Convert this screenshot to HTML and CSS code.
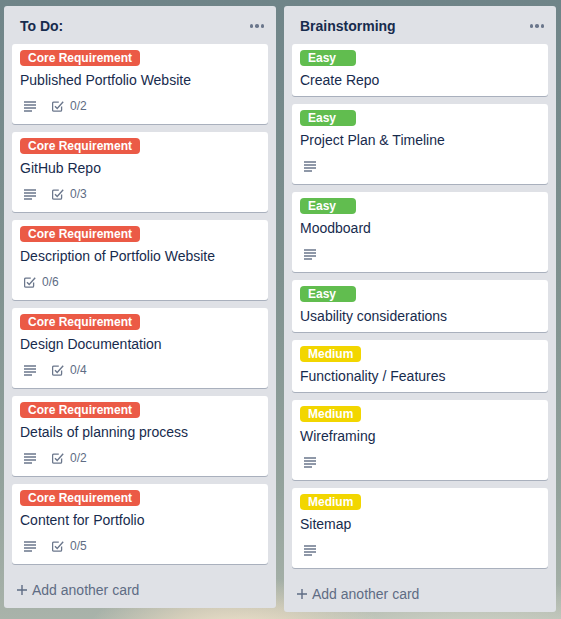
FILE: index.html
```html
<!DOCTYPE html>
<html lang="en">
<head>
<meta charset="utf-8">
<title>Board</title>
<link rel="stylesheet" href="styles.css">
</head>
<body>
<div class="board">
  <section class="list">
    <header class="list-header">
      <h2>To Do:</h2>
      <span class="dots"><i></i><i></i><i></i></span>
    </header>
    <div class="cards">
      <article class="card">
        <div class="label red">Core Requirement</div>
        <p class="title">Published Portfolio Website</p>
        <div class="badges">
          <span class="badge desc"><span class="icon"><svg width="12" height="11" viewBox="0 0 12 11"><path d="M0 1h12M0 4h12M0 7h12M0 10h8" stroke="#6b778c" stroke-width="1.3" fill="none"/></svg></span></span>
          <span class="badge"><span class="icon"><svg width="12" height="12" viewBox="0 0 12 12"><path d="M9.6 6.5v3.4a1.2 1.2 0 0 1-1.2 1.2H1.8A1.2 1.2 0 0 1 .6 9.9V3.3a1.2 1.2 0 0 1 1.2-1.2h5" stroke="#6b778c" stroke-width="1.3" fill="none"/><path d="M3 6.2l2.2 2.3L11.2 1.8" stroke="#6b778c" stroke-width="1.4" fill="none"/></svg></span><span class="badge-text">0/2</span></span>
        </div>
      </article>
      <article class="card">
        <div class="label red">Core Requirement</div>
        <p class="title">GitHub Repo</p>
        <div class="badges">
          <span class="badge desc"><span class="icon"><svg width="12" height="11" viewBox="0 0 12 11"><path d="M0 1h12M0 4h12M0 7h12M0 10h8" stroke="#6b778c" stroke-width="1.3" fill="none"/></svg></span></span>
          <span class="badge"><span class="icon"><svg width="12" height="12" viewBox="0 0 12 12"><path d="M9.6 6.5v3.4a1.2 1.2 0 0 1-1.2 1.2H1.8A1.2 1.2 0 0 1 .6 9.9V3.3a1.2 1.2 0 0 1 1.2-1.2h5" stroke="#6b778c" stroke-width="1.3" fill="none"/><path d="M3 6.2l2.2 2.3L11.2 1.8" stroke="#6b778c" stroke-width="1.4" fill="none"/></svg></span><span class="badge-text">0/3</span></span>
        </div>
      </article>
      <article class="card">
        <div class="label red">Core Requirement</div>
        <p class="title">Description of Portfolio Website</p>
        <div class="badges">
          <span class="badge"><span class="icon"><svg width="12" height="12" viewBox="0 0 12 12"><path d="M9.6 6.5v3.4a1.2 1.2 0 0 1-1.2 1.2H1.8A1.2 1.2 0 0 1 .6 9.9V3.3a1.2 1.2 0 0 1 1.2-1.2h5" stroke="#6b778c" stroke-width="1.3" fill="none"/><path d="M3 6.2l2.2 2.3L11.2 1.8" stroke="#6b778c" stroke-width="1.4" fill="none"/></svg></span><span class="badge-text">0/6</span></span>
        </div>
      </article>
      <article class="card">
        <div class="label red">Core Requirement</div>
        <p class="title">Design Documentation</p>
        <div class="badges">
          <span class="badge desc"><span class="icon"><svg width="12" height="11" viewBox="0 0 12 11"><path d="M0 1h12M0 4h12M0 7h12M0 10h8" stroke="#6b778c" stroke-width="1.3" fill="none"/></svg></span></span>
          <span class="badge"><span class="icon"><svg width="12" height="12" viewBox="0 0 12 12"><path d="M9.6 6.5v3.4a1.2 1.2 0 0 1-1.2 1.2H1.8A1.2 1.2 0 0 1 .6 9.9V3.3a1.2 1.2 0 0 1 1.2-1.2h5" stroke="#6b778c" stroke-width="1.3" fill="none"/><path d="M3 6.2l2.2 2.3L11.2 1.8" stroke="#6b778c" stroke-width="1.4" fill="none"/></svg></span><span class="badge-text">0/4</span></span>
        </div>
      </article>
      <article class="card">
        <div class="label red">Core Requirement</div>
        <p class="title">Details of planning process</p>
        <div class="badges">
          <span class="badge desc"><span class="icon"><svg width="12" height="11" viewBox="0 0 12 11"><path d="M0 1h12M0 4h12M0 7h12M0 10h8" stroke="#6b778c" stroke-width="1.3" fill="none"/></svg></span></span>
          <span class="badge"><span class="icon"><svg width="12" height="12" viewBox="0 0 12 12"><path d="M9.6 6.5v3.4a1.2 1.2 0 0 1-1.2 1.2H1.8A1.2 1.2 0 0 1 .6 9.9V3.3a1.2 1.2 0 0 1 1.2-1.2h5" stroke="#6b778c" stroke-width="1.3" fill="none"/><path d="M3 6.2l2.2 2.3L11.2 1.8" stroke="#6b778c" stroke-width="1.4" fill="none"/></svg></span><span class="badge-text">0/2</span></span>
        </div>
      </article>
      <article class="card">
        <div class="label red">Core Requirement</div>
        <p class="title">Content for Portfolio</p>
        <div class="badges">
          <span class="badge desc"><span class="icon"><svg width="12" height="11" viewBox="0 0 12 11"><path d="M0 1h12M0 4h12M0 7h12M0 10h8" stroke="#6b778c" stroke-width="1.3" fill="none"/></svg></span></span>
          <span class="badge"><span class="icon"><svg width="12" height="12" viewBox="0 0 12 12"><path d="M9.6 6.5v3.4a1.2 1.2 0 0 1-1.2 1.2H1.8A1.2 1.2 0 0 1 .6 9.9V3.3a1.2 1.2 0 0 1 1.2-1.2h5" stroke="#6b778c" stroke-width="1.3" fill="none"/><path d="M3 6.2l2.2 2.3L11.2 1.8" stroke="#6b778c" stroke-width="1.4" fill="none"/></svg></span><span class="badge-text">0/5</span></span>
        </div>
      </article>
    </div>
    <div class="composer">
      <svg width="10" height="10" viewBox="0 0 10 10"><path d="M5 0v10M0 5h10" stroke="#5e6c84" stroke-width="1.4"/></svg>
      <span>Add another card</span>
    </div>
  </section>

  <section class="list">
    <header class="list-header">
      <h2>Brainstorming</h2>
      <span class="dots"><i></i><i></i><i></i></span>
    </header>
    <div class="cards">
      <article class="card">
        <div class="label green">Easy</div>
        <p class="title">Create Repo</p>
      </article>
      <article class="card">
        <div class="label green">Easy</div>
        <p class="title">Project Plan &amp; Timeline</p>
        <div class="badges">
          <span class="badge desc"><span class="icon"><svg width="12" height="11" viewBox="0 0 12 11"><path d="M0 1h12M0 4h12M0 7h12M0 10h8" stroke="#6b778c" stroke-width="1.3" fill="none"/></svg></span></span>
        </div>
      </article>
      <article class="card">
        <div class="label green">Easy</div>
        <p class="title">Moodboard</p>
        <div class="badges">
          <span class="badge desc"><span class="icon"><svg width="12" height="11" viewBox="0 0 12 11"><path d="M0 1h12M0 4h12M0 7h12M0 10h8" stroke="#6b778c" stroke-width="1.3" fill="none"/></svg></span></span>
        </div>
      </article>
      <article class="card">
        <div class="label green">Easy</div>
        <p class="title">Usability considerations</p>
      </article>
      <article class="card">
        <div class="label yellow">Medium</div>
        <p class="title">Functionality / Features</p>
      </article>
      <article class="card">
        <div class="label yellow">Medium</div>
        <p class="title">Wireframing</p>
        <div class="badges">
          <span class="badge desc"><span class="icon"><svg width="12" height="11" viewBox="0 0 12 11"><path d="M0 1h12M0 4h12M0 7h12M0 10h8" stroke="#6b778c" stroke-width="1.3" fill="none"/></svg></span></span>
        </div>
      </article>
      <article class="card">
        <div class="label yellow">Medium</div>
        <p class="title">Sitemap</p>
        <div class="badges">
          <span class="badge desc"><span class="icon"><svg width="12" height="11" viewBox="0 0 12 11"><path d="M0 1h12M0 4h12M0 7h12M0 10h8" stroke="#6b778c" stroke-width="1.3" fill="none"/></svg></span></span>
        </div>
      </article>
    </div>
    <div class="composer">
      <svg width="10" height="10" viewBox="0 0 10 10"><path d="M5 0v10M0 5h10" stroke="#5e6c84" stroke-width="1.4"/></svg>
      <span>Add another card</span>
    </div>
  </section>
</div>
</body>
</html>
```

FILE: styles.css
```css
html, body {
  margin: 0;
  height: 619px;
  overflow: hidden;
}

body {
  font-family: "Liberation Sans", Arial, sans-serif;
  background:
    radial-gradient(ellipse 150px 60px at 235px 636px, #f4e6cf 0%, rgba(238, 222, 196, 0.6) 50%, rgba(238, 222, 196, 0) 100%),
    radial-gradient(ellipse 260px 60px at 470px 640px, #d8d9cc 0%, rgba(216, 217, 204, 0) 100%),
    linear-gradient(180deg, #6f8488 0%, #7f918f 45%, #94a39d 80%, #a9b3aa 100%);
}

.board {
  display: flex;
  align-items: flex-start;
  gap: 8px;
  padding: 6px 4px;
}

.list {
  width: 272px;
  background: #dfe1e6;
  border-radius: 3px;
  display: flex;
  flex-direction: column;
}

.list-header {
  display: flex;
  align-items: center;
  justify-content: space-between;
  padding: 10px 12px 8px 16px;
}

.list-header h2 {
  margin: 0;
  font-size: 14px;
  font-weight: 700;
  line-height: 20px;
  color: #172b4d;
}

.dots {
  display: flex;
  gap: 2px;
}

.dots i {
  width: 3.5px;
  height: 3.5px;
  border-radius: 50%;
  background: #6b778c;
}

.cards {
  display: flex;
  flex-direction: column;
  gap: 8px;
  padding: 0 8px 8px;
}

.card {
  background: #fff;
  border-radius: 3px;
  box-shadow: 0 1px 0 rgba(9, 30, 66, 0.25);
  padding: 6px 8px 2px;
}

.label {
  width: fit-content;
  min-width: 40px;
  height: 16px;
  line-height: 16px;
  padding: 0 8px;
  border-radius: 4px;
  font-size: 12px;
  font-weight: 700;
  color: #fff;
  margin-bottom: 4px;
}

.red { background: #eb5a46; }
.green { background: #61bd4f; }
.yellow { background: #f2d600; }

.title {
  margin: 0 0 4px;
  font-size: 14px;
  line-height: 20px;
  color: #172b4d;
}

.badges {
  display: flex;
  padding-top: 2px;
  margin-bottom: 6px;
  height: 20px;
}

.badge {
  display: flex;
  align-items: center;
  height: 20px;
  padding: 0 2px;
  color: #5e6c84;
  font-size: 12px;
}

.badge.desc {
  margin-right: 8px;
}

.icon {
  width: 16px;
  height: 20px;
  display: flex;
  align-items: center;
  justify-content: center;
}

.badge-text {
  margin-left: 4px;
}

.composer {
  display: flex;
  align-items: center;
  gap: 5px;
  height: 36px;
  padding-left: 13px;
  color: #5e6c84;
  font-size: 14px;
}
```
